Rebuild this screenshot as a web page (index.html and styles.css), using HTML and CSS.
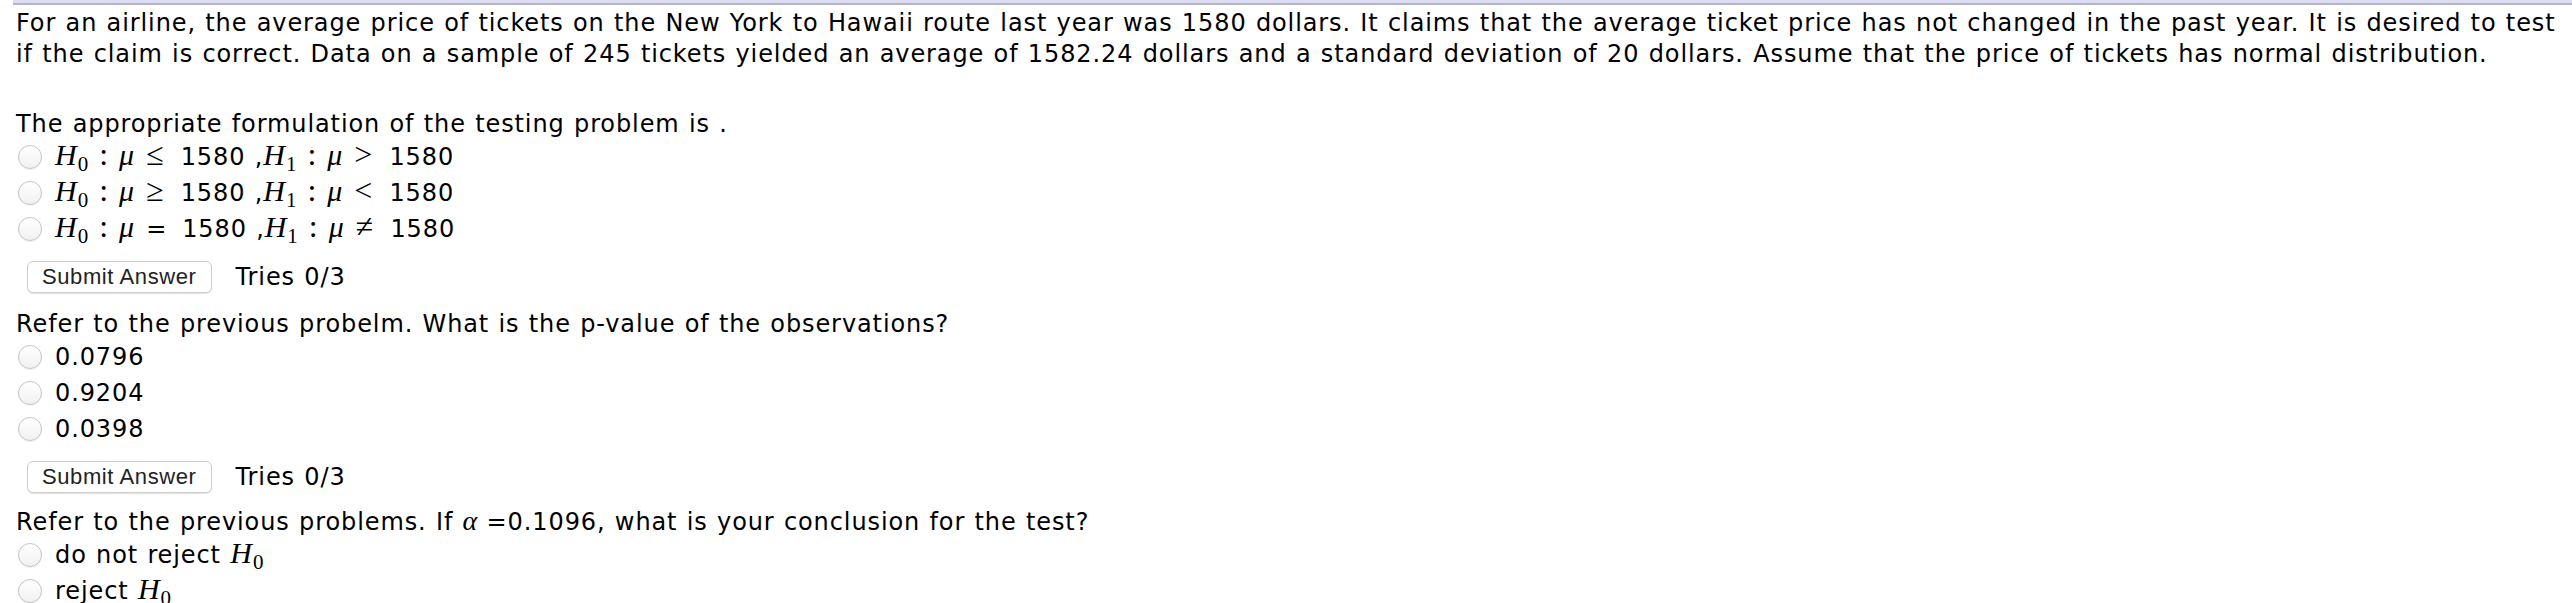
FILE: index.html
```html
<!DOCTYPE html>
<html>
<head>
<meta charset="utf-8">
<link rel="stylesheet" href="styles.css">
</head>
<body>
<div class="topbar"></div>
<div class="content">
  <div class="stem">
    <div class="line">For an airline, the average price of tickets on the New York to Hawaii route last year was 1580 dollars. It claims that the average ticket price has not changed in the past year. It is desired to test</div>
    <div class="line">if the claim is correct. Data on a sample of 245 tickets yielded an average of 1582.24 dollars and a standard deviation of 20 dollars. Assume that the price of tickets has normal distribution.</div>
  </div>

  <div class="prompt first">The appropriate formulation of the testing problem is .</div>
  <div class="opts">
    <label class="opt"><span class="radio"></span><span class="txt"><span class="mv">H</span><span class="sub">0</span><span class="rel">:</span><span class="mv">μ</span><span class="rel r">≤</span>1580 ,<span class="mv">H</span><span class="sub">1</span><span class="rel">:</span><span class="mv">μ</span><span class="rel r">&gt;</span>1580</span></label>
    <label class="opt"><span class="radio"></span><span class="txt"><span class="mv">H</span><span class="sub">0</span><span class="rel">:</span><span class="mv">μ</span><span class="rel r">≥</span>1580 ,<span class="mv">H</span><span class="sub">1</span><span class="rel">:</span><span class="mv">μ</span><span class="rel r">&lt;</span>1580</span></label>
    <label class="opt"><span class="radio"></span><span class="txt"><span class="mv">H</span><span class="sub">0</span><span class="rel">:</span><span class="mv">μ</span><span class="eq">=</span>1580 ,<span class="mv">H</span><span class="sub">1</span><span class="rel">:</span><span class="mv">μ</span><span class="rel r">≠</span>1580</span></label>
  </div>
  <div class="actions"><span class="btn">Submit Answer</span><span class="tries">Tries 0/3</span></div>

  <div class="prompt">Refer to the previous probelm. What is the p-value of the observations?</div>
  <div class="opts">
    <label class="opt"><span class="radio"></span><span class="txt">0.0796</span></label>
    <label class="opt"><span class="radio"></span><span class="txt">0.9204</span></label>
    <label class="opt"><span class="radio"></span><span class="txt">0.0398</span></label>
  </div>
  <div class="actions"><span class="btn">Submit Answer</span><span class="tries">Tries 0/3</span></div>

  <div class="prompt third">Refer to the previous problems. If <span class="mv alpha">α</span> =0.1096, what is your conclusion for the test?</div>
  <div class="opts">
    <label class="opt"><span class="radio"></span><span class="txt">do not reject <span class="mv">H</span><span class="sub">0</span></span></label>
    <label class="opt"><span class="radio"></span><span class="txt">reject <span class="mv">H</span><span class="sub">0</span></span></label>
  </div>
</div>
</body>
</html>
```
FILE: styles.css
```css
html, body {
  margin: 0;
  padding: 0;
  background: #ffffff;
}
body {
  font-family: Verdana, "DejaVu Sans", sans-serif;
  font-size: 24px;
  letter-spacing: 0.9px;
  word-spacing: 0.8px;
  color: #000000;
}
.topbar {
  margin-left: 13px;
  height: 3px;
  background: #dcdcf4;
  border-bottom: 2px solid #b8b8c0;
}
.content {
  padding-left: 16px;
}
.stem {
  margin-top: 3px;
  line-height: 31px;
}
.line {
  white-space: nowrap;
}
.prompt {
  line-height: 29px;
  margin-top: 17px;
  white-space: nowrap;
}
.prompt.first {
  margin-top: 40px;
}
.prompt.third {
  margin-top: 15px;
}
.opt {
  display: flex;
  align-items: center;
  height: 36px;
  padding-left: 2px;
}
.radio {
  flex: none;
  width: 22px;
  height: 22px;
  border-radius: 50%;
  border: 1px solid #c4c4c4;
  background: linear-gradient(#ffffff, #f1f1f1);
  box-shadow: 0 1px 1px rgba(0, 0, 0, 0.06);
  margin-right: 13px;
  margin-top: -1px;
}
.txt {
  white-space: nowrap;
  line-height: 29px;
}
.mv {
  font-family: "Liberation Serif", "DejaVu Serif", serif;
  font-style: italic;
  font-size: 30px;
  letter-spacing: 0;
  line-height: 0;
}
.alpha {
  font-size: 28px;
}
.sub {
  font-family: "Liberation Serif", "DejaVu Serif", serif;
  font-size: 21px;
  letter-spacing: 0;
  line-height: 0;
  position: relative;
  top: 6px;
  margin-left: 1px;
}
.rel {
  font-family: "Liberation Serif", "DejaVu Serif", serif;
  font-size: 32px;
  letter-spacing: 0;
  line-height: 0;
  margin: 0 11px;
}
.rel.r {
  margin-left: 12px;
  margin-right: 17px;
}
.eq {
  margin: 0 15px 0 12px;
}
.actions {
  display: flex;
  align-items: center;
  gap: 24px;
  margin-top: 14px;
  margin-left: 11px;
}
.btn {
  display: inline-flex;
  align-items: center;
  height: 30px;
  padding: 0 14px;
  font-family: "Liberation Sans", Arial, sans-serif;
  font-size: 22px;
  letter-spacing: 0.6px;
  word-spacing: 0;
  color: #222222;
  background: #ffffff;
  border: 1px solid #cfcfcf;
  border-radius: 6px;
  box-shadow: 0 1px 1px rgba(0, 0, 0, 0.12);
}
.tries {
  line-height: 29px;
}
```
